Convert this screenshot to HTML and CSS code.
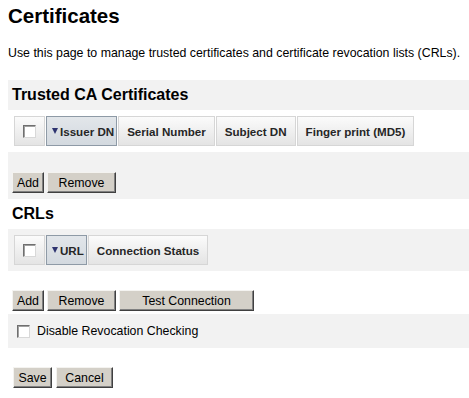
FILE: index.html
```html
<!DOCTYPE html>
<html lang="en">
<head>
  <meta charset="UTF-8">
  <title>Certificates</title>
  <link rel="stylesheet" href="styles.css">
</head>
<body>
  <h1 class="page-title">Certificates</h1>
  <p class="intro">Use this page to manage trusted certificates and certificate revocation lists (CRLs).</p>

  <div class="band shaded section-head">
    <h2>Trusted CA Certificates</h2>
  </div>
  <div class="band table-row">
    <div class="col-heads">
      <div class="col-head check-col"><span class="box"></span></div>
      <div class="col-head sorted"><span class="sort-arrow"></span>Issuer DN</div>
      <div class="col-head">Serial Number</div>
      <div class="col-head">Subject DN</div>
      <div class="col-head">Finger print (MD5)</div>
    </div>
  </div>
  <div class="band shaded actions">
    <button class="btn btn-add">Add</button>
    <button class="btn btn-mid">Remove</button>
  </div>

  <div class="band section-head">
    <h2>CRLs</h2>
  </div>
  <div class="band shaded table-row">
    <div class="col-heads">
      <div class="col-head check-col"><span class="box"></span></div>
      <div class="col-head sorted"><span class="sort-arrow"></span>URL</div>
      <div class="col-head">Connection Status</div>
    </div>
  </div>
  <div class="band actions">
    <button class="btn btn-add">Add</button>
    <button class="btn btn-mid">Remove</button>
    <button class="btn btn-wide">Test Connection</button>
  </div>
  <div class="band shaded option">
    <span class="box"></span>
    <label>Disable Revocation Checking</label>
  </div>
  <div class="band footer">
    <button class="btn btn-save">Save</button>
    <button class="btn btn-cancel">Cancel</button>
  </div>
</body>
</html>
```

FILE: styles.css
```css
body {
  font-family: "Liberation Sans", Arial, sans-serif;
  margin: 0 0 0 8px;
  color: #000;
}
.page-title {
  font-size: 20.5px;
  line-height: 24px;
  margin: 4px 0 0 0;
}
.intro {
  font-size: 12.35px;
  line-height: 15px;
  margin: 18px 0 0 0;
}
.band {
  box-sizing: border-box;
}
.shaded {
  background-color: #f2f2f2;
}
.section-head {
  height: 30px;
  padding: 5px 4px 0 4px;
}
.section-head h2 {
  font-size: 16px;
  line-height: 20px;
  margin: 0;
}
.intro + .section-head {
  margin-top: 19px;
}
.table-row {
  padding: 6px 6px;
}
.col-heads {
  display: flex;
  gap: 1px;
}
.col-head {
  box-sizing: border-box;
  height: 30px;
  padding: 0 8px;
  display: flex;
  align-items: center;
  font-size: 11.6px;
  font-weight: bold;
  color: #262626;
  background: linear-gradient(#fbfbfb, #e4e4e4);
  border: 1px solid #d6d6d6;
}
.check-col {
  width: 31px;
  justify-content: center;
  padding: 0;
}
.col-head.sorted {
  background: linear-gradient(#e2e6ea, #d3d9df);
  border-color: #8e9aa6;
  padding: 0 2px 0 5px;
}
.sort-arrow {
  width: 0;
  height: 0;
  border-left: 3px solid transparent;
  border-right: 3px solid transparent;
  border-top: 6px solid #2e3470;
  margin-right: 2px;
}
.box {
  box-sizing: border-box;
  display: inline-block;
  width: 13px;
  height: 13px;
  background: #fff;
  border: 1px solid;
  border-color: #6f6f6f #d8d8d8 #d8d8d8 #6f6f6f;
  box-shadow: inset 1px 1px 0 #a0a0a0;
}
.actions {
  display: flex;
  gap: 3px;
  padding: 20px 0 6px 4px;
}
.band.actions:not(.shaded) {
  padding: 19px 0 3px 4px;
}
.btn {
  box-sizing: border-box;
  height: 21px;
  padding: 0 4px;
  font-family: "Liberation Sans", Arial, sans-serif;
  font-size: 12.35px;
  color: #000;
  background-color: #d4d0c8;
  border: 1px solid;
  border-color: #f4f3f0 #404040 #404040 #f4f3f0;
  box-shadow: inset -1px -1px 0 #808080;
  border-radius: 0;
}
.btn-add {
  width: 32px;
}
.btn-mid {
  width: 69px;
}
.btn-wide {
  width: 135px;
}
.btn-save {
  width: 39px;
}
.btn-cancel {
  width: 57px;
}
.option {
  height: 34px;
  display: flex;
  align-items: center;
  gap: 7px;
  padding-left: 9px;
  font-size: 12.35px;
}
.footer {
  display: flex;
  gap: 4px;
  padding: 19px 0 0 5px;
}
```
